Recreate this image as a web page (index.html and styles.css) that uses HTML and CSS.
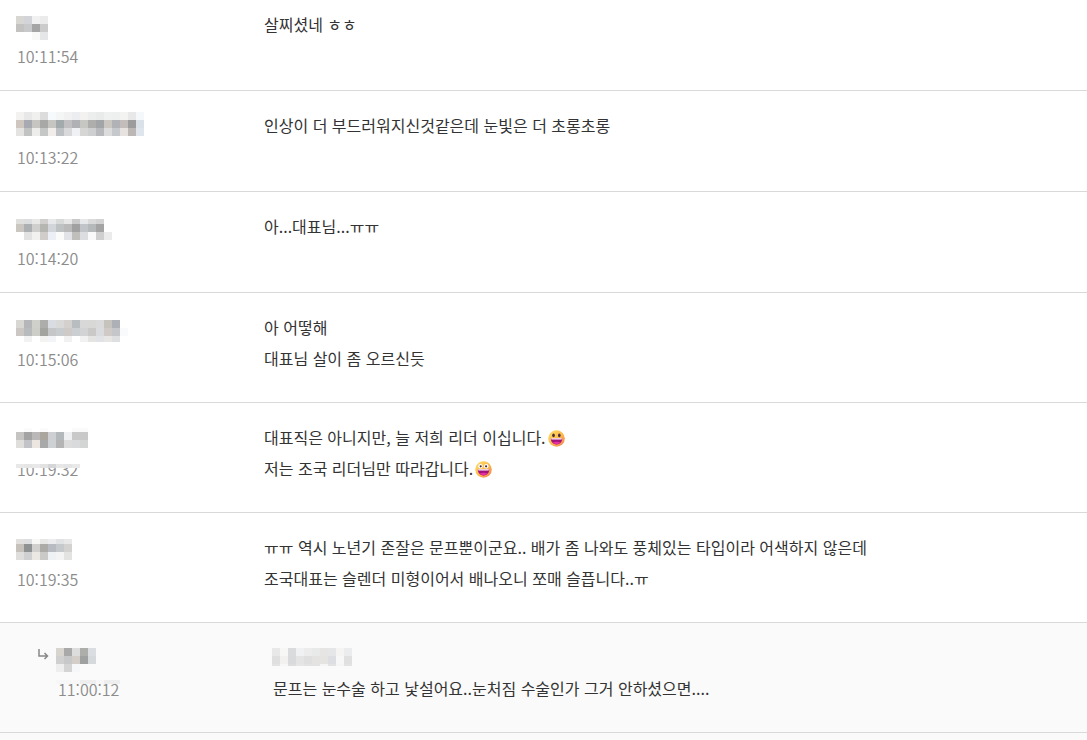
FILE: index.html
```html
<!DOCTYPE html>
<html lang="ko">
<head>
    <meta charset="UTF-8">
    <meta name="viewport" content="width=device-width, initial-scale=1.0">
    <title>댓글</title>
    <link rel="stylesheet" href="styles.css">
</head>
<body>
    <!-- Shared emoji -->
    <svg class="symbols" aria-hidden="true">
        <defs>
            <linearGradient id="face" x1="0" y1="0" x2="1" y2="1">
                <stop offset="0" stop-color="#ffe06a"/>
                <stop offset="0.55" stop-color="#fcb84b"/>
                <stop offset="1" stop-color="#f07a55"/>
            </linearGradient>
        </defs>
        <symbol id="smile" viewBox="0 0 17 17">
            <circle cx="8.5" cy="8.5" r="8.3" fill="url(#face)"/>
            <ellipse cx="5.5" cy="5.3" rx="1.3" ry="1.9" fill="#4a2d3a"/>
            <ellipse cx="11.3" cy="5.3" rx="1.3" ry="1.9" fill="#4a2d3a"/>
            <path d="M2.8 8.3h11.4c0 4-2.6 6.2-5.7 6.2S2.8 12.3 2.8 8.3z" fill="#a3127c"/>
            <path d="M3 8.3h11l-.4 1.2H3.4z" fill="#fff"/>
            <path d="M4.6 12.6c2-1.3 5.8-1.3 7.8 0-2 2.4-5.8 2.4-7.8 0z" fill="#e52fa0"/>
        </symbol>
        <symbol id="grin" viewBox="0 0 17 17">
            <circle cx="8.5" cy="8.5" r="8.3" fill="url(#face)"/>
            <circle cx="5.5" cy="5.3" r="2.2" fill="#fff"/>
            <circle cx="11.3" cy="5.3" r="2.2" fill="#fff"/>
            <circle cx="5.7" cy="5.3" r="1.1" fill="#4a2d3a"/>
            <circle cx="11.1" cy="5.3" r="1.1" fill="#4a2d3a"/>
            <path d="M2.8 8.3h11.4c0 4-2.6 6.2-5.7 6.2S2.8 12.3 2.8 8.3z" fill="#a3127c"/>
            <path d="M3 8.3h11l-.4 1.2H3.4z" fill="#fff"/>
            <path d="M4.6 12.6c2-1.3 5.8-1.3 7.8 0-2 2.4-5.8 2.4-7.8 0z" fill="#e52fa0"/>
        </symbol>
    </svg>

    <main class="comments">
        <article class="comment first">
            <div class="info">
                <svg class="mosaic" data-name="c1"></svg>
                <time>10:11:54</time>
            </div>
            <div class="message"><p>살찌셨네 ㅎㅎ</p></div>
        </article>
        <article class="comment">
            <div class="info">
                <svg class="mosaic" data-name="c2"></svg>
                <time>10:13:22</time>
            </div>
            <div class="message"><p>인상이 더 부드러워지신것같은데 눈빛은 더 초롱초롱</p></div>
        </article>
        <article class="comment">
            <div class="info">
                <svg class="mosaic" data-name="c3"></svg>
                <time>10:14:20</time>
            </div>
            <div class="message"><p>아...대표님...ㅠㅠ</p></div>
        </article>
        <article class="comment">
            <div class="info">
                <svg class="mosaic" data-name="c4"></svg>
                <time>10:15:06</time>
            </div>
            <div class="message"><p>아 어떻해<br>대표님 살이 좀 오르신듯</p></div>
        </article>
        <article class="comment">
            <div class="info">
                <svg class="mosaic" data-name="c5"></svg>
                <time>10:19:32<svg class="mosaic cover" data-name="t5"></svg></time>
            </div>
            <div class="message">
                <p>대표직은 아니지만, 늘 저희 리더 이십니다.<svg class="emoji"><use href="#smile"/></svg><br>저는 조국 리더님만 따라갑니다.<svg class="emoji"><use href="#grin"/></svg></p>
            </div>
        </article>
        <article class="comment">
            <div class="info">
                <svg class="mosaic" data-name="c6"></svg>
                <time>10:19:35</time>
            </div>
            <div class="message"><p>ㅠㅠ 역시 노년기 존잘은 문프뿐이군요.. 배가 좀 나와도 풍체있는 타입이라 어색하지 않은데<br>조국대표는 슬렌더 미형이어서 배나오니 쪼매 슬픕니다..ㅠ</p></div>
        </article>
        <!-- Replies -->
        <section class="replies">
            <article class="comment reply">
                <svg class="arrow" viewBox="0 0 20 31" aria-hidden="true">
                    <path d="M3 7v7h8M8.5 11l3 3-3 3"/>
                </svg>
                <div class="info">
                    <svg class="mosaic" data-name="c7"></svg>
                    <time>11:00:12<svg class="mosaic cover" data-name="t7"></svg></time>
                </div>
                <div class="message">
                    <svg class="mosaic" data-name="m7"></svg>
                    <p>문프는 눈수술 하고 낯설어요..눈처짐 수술인가 그거 안하셨으면....</p>
                </div>
            </article>
        </section>
    </main>
    <script src="script.js"></script>
</body>
</html>
```

FILE: styles.css
```css
* {
    box-sizing: border-box;
}
body {
    margin: 0;
    background: #fff;
    color: #333;
    font-family: "Noto Sans CJK KR", sans-serif;
    font-size: 16px;
    line-height: 31px;
}
p {
    margin: 0;
}
.symbols {
    position: absolute;
    width: 0;
    height: 0;
}
.comments {
    display: flex;
    flex-direction: column;
    min-height: 100vh;
}
.comment {
    display: flex;
    padding: 19px 16px 18px;
    border-bottom: 1px solid #d9d9d9;
}
.first {
    padding-top: 9px;
}
.info {
    flex: 0 0 248px;
}
.info time {
    display: block;
    position: relative;
    padding-left: 1px;
    color: #8c8c8c;
    font-weight: 350;
    line-height: 32px;
}
.message {
    flex: 1;
    min-width: 0;
    padding-bottom: 10px;
}
.mosaic {
    display: block;
    height: 31px;
    shape-rendering: crispEdges;
}
.cover {
    position: absolute;
    top: 0;
    left: 0;
}
.emoji {
    width: 17px;
    height: 17px;
    margin-left: 2px;
    vertical-align: -3px;
}

/* Replies */
.replies {
    flex: 1;
    background: #fafafa;
}
.reply {
    padding-left: 36px;
}
.reply .info {
    flex-basis: 216px;
}
.reply time {
    padding-left: 2px;
}
.reply p {
    padding-left: 1px;
}
.arrow {
    flex: none;
    width: 20px;
    height: 31px;
    fill: none;
    stroke: #888;
    stroke-width: 1.5;
}
```

FILE: script.js
```js
// Hidden nicknames: each row is [y, height, colours], "-" leaves a cell empty
const CELL = 8;
const mosaics = {
    c1: [
        [7, 8, 'd9d7d2 d2d4d9 f1f1f1 ebebeb'],
        [15, 8, 'c4c2c0 c8c9cb a5a5a5 cbcbcb'],
        [23, 8, '- - f9f9f8 e4e6e8']
    ],
    c2: [
        [2, 8, 'f3f2f0 e8e8e9 f0f0ee dcdcdc f7fafc f4f5f5 f1f1f2 ebedf0 f3f2f0 ebeeed e9ebea eff0f0 eef0ef f3f3f2 e8e8e8 f5f8fb'],
        [10, 8, 'cfc6c0 a7abb1 c6c5c1 a8a9a7 c6c5c2 a3aaac c1bfc1 afb1b5 c6c6c3 aeaeac a2a4a8 cac7c1 b0b2b5 c2bdba 9c9c9d dae1e9'],
        [18, 8, 'e5e3e2 c1c3c3 ededeb c5c7c6 f1edeb bdc1c3 d9d9db f0f1f5 d6d6d5 cecfd1 b8b9bd dddcdc c7c8cb e5e2df bcb7b4 dfe5ed']
    ],
    c3: [
        [8, 5, 'dfdfde dcddde e8e8e7 d0cfcd e6e8e9 d8dad9 e7e7e7 c9cac9 e6e8e9 dadada d3d3d3'],
        [13, 8, 'c9c7c0 adb0b3 cfcfce b5b5b2 d2d5d9 bfc2c2 bababa a1a1a1 c1c5ca b6b9ba a4a4a4'],
        [21, 8, '- e2e2e2 f1f1ef d0cdca ecf0f6 fbfbfa e2e3e6 c0bfbb dcdde1 f9f9fa cfcfcf ebebeb']
    ],
    c4: [
        [8, 8, 'd9d7d4 b4b6b7 d0d0cb adadab d9dce0 d9d9d9 d4d0cd b8bdc0 d8d8d8 d8d8d7 dadada c6c3bf adb0b4'],
        [16, 8, 'cac7c4 b8babb cecec9 a3a39f c5c6c8 c8cccf cecac7 cbcfd2 d2d3d4 cac9c7 dadbdd cfcac7 c4c6c9 f8fafc'],
        [24, 6, '- f2f2f2 - f3f3f2 f2f4f7 - f1f1f1 - f1f1f1 e4e4e3 e0e2e5 e7e6e4 dedfe0']
    ],
    c5: [
        [6, 4, '- fbfbfb - fbfbfb - - - fafafa fafafa'],
        [10, 8, 'c5c4c3 a3a3a3 bab9b7 aaa69f cecfd3 b3b8bb eff0f2 c9c9c9 c9c9c9'],
        [18, 8, 'dfdedd c2c3c6 ebe6df a9a9a9 cdd1d4 b4b4b4 dcdcdc d9dadc d3d4d4']
    ],
    t5: [
        [8, 3, 'ffffff ffffff ffffff ffffff ffffff ffffff ffffff ffffff'],
        [11, 4, 'e8e8e8 e5e5e5 e8e8e8 e2e2e2 d5d6d8 e7e7e7 e4e4e4 e9e9e9']
    ],
    c6: [
        [7, 5, 'e1e0df dddee0 f7f7f5 e7e7e5 ececef e1e2e4 e8e8e8'],
        [12, 8, 'c7c1bb 8f9293 d1d0cf acaba8 b8bbc1 c6c9cb d3d2d1'],
        [20, 8, 'dfdedc cfd0d2 ebe7e2 cacac9 eef2f5 f4f4f5 e3e3e2']
    ],
    c7: [
        [6, 8, 'd8d5d1 a9a9a9 dddddd adadab dadee1'],
        [14, 8, 'd1d0d0 c8c8c8 d3cec9 9fa0a0 d5d9dc'],
        [22, 8, 'eeeeee d4d4d4 f6f7f9']
    ],
    t7: [
        [7, 4, 'f7f7f7 f7f7f7 f7f7f7 eeeeee eeeeee f7f7f7 eeeeee eeeeee']
    ],
    m7: [
        [6, 8, 'e8e8e8 f7f7f6 dadbdd f0f1f3 ececec e8e9e9 e6e5e3 e4e6e8 f5f4f2 ebecee'],
        [14, 8, 'dfdfdf f3f1ef d9dadb e4e4e4 dedfde e4e3e1 e5e4e3 dcdee1 f7f7f7 e0e0e0'],
        [22, 2, 'e3e3e3 f7f7f6 dddddd e6e6e6 e3e3e3 e3e3e3 f5f5f5 e3e3e3 f5f5f5 e3e3e3']
    ]
};

document.querySelectorAll('.mosaic').forEach(function(svg) {
    let width = 0;
    mosaics[svg.dataset.name].forEach(function([y, height, colours]) {
        colours.split(' ').forEach(function(colour, i) {
            width = Math.max(width, (i + 1) * CELL);
            if (colour === '-') return;
            const rect = document.createElementNS('http://www.w3.org/2000/svg', 'rect');
            rect.setAttribute('x', i * CELL);
            rect.setAttribute('y', y);
            rect.setAttribute('width', CELL);
            rect.setAttribute('height', height);
            rect.setAttribute('fill', '#' + colour);
            svg.appendChild(rect);
        });
    });
    svg.setAttribute('width', width);
});
```
